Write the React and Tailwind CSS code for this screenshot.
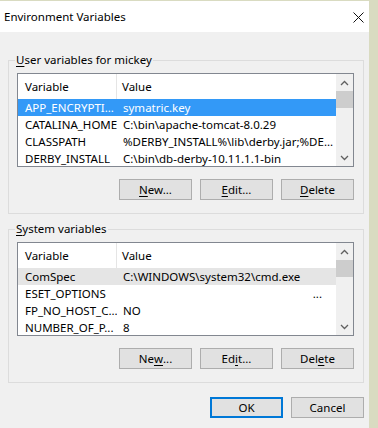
import React from "react";

const FONT = { fontFamily: '"Noto Sans", "Liberation Sans", sans-serif' };

function Btn({ children, primary }) {
  return (
    <div
      className={
        "w-[73px] h-[21px] flex items-center justify-center bg-[#e1e1e1] text-[11.5px] text-black leading-none " +
        (primary ? "border-2 border-[#0078d7]" : "border border-[#adadad]")
      }
    >
      {children}
    </div>
  );
}

function U({ children }) {
  return <span className="underline underline-offset-[2px]">{children}</span>;
}

function Chevron({ up }) {
  return (
    <svg width="9" height="6" viewBox="0 0 9 6">
      <path
        d={up ? "M1 5 L4.5 1.5 L8 5" : "M1 1 L4.5 4.5 L8 1"}
        fill="none"
        stroke="#606060"
        strokeWidth="1.3"
      />
    </svg>
  );
}

function ListBox({ rows, selected, selStyle }) {
  return (
    <div className="w-[337px] h-[94px] border border-[#828790] bg-white flex overflow-hidden">
      <div className="flex-1 flex flex-col overflow-hidden">
        <div className="h-[25px] flex shrink-0 items-center text-[11.5px] text-black">
          <div className="w-[99px] h-full flex items-center pl-[7px] border-r border-[#e5e5e5]">Variable</div>
          <div className="pl-[5px]">Value</div>
        </div>
        {rows.map((r, i) => (
          <div
            key={i}
            className={
              "h-[17px] shrink-0 flex items-center text-[11.5px] whitespace-nowrap " +
              (i === selected
                ? selStyle === "blue"
                  ? "bg-[#3399f7] text-white"
                  : "bg-[#e5e5e5] text-black"
                : "text-black")
            }
          >
            <div className="w-[99px] pl-[7px] overflow-hidden">{r[0]}</div>
            <div className={"pl-[6px] " + (r[2] ? "flex-1 text-right pr-[14px]" : "")}>{r[1]}</div>
          </div>
        ))}
      </div>
      <div className="w-[17px] bg-[#f0f0f0] flex flex-col shrink-0">
        <div className="h-[17px] flex items-center justify-center">
          <Chevron up />
        </div>
        <div className="h-[17px] bg-[#cdcdcd]" />
        <div className="flex-1" />
        <div className="h-[17px] flex items-center justify-center">
          <Chevron />
        </div>
      </div>
    </div>
  );
}

function Group({ label, children, className }) {
  return (
    <div className={"relative ml-[8px] w-[356px] border border-[#dcdcdc] pt-[12px] pl-[8px] pb-[13px] " + className}>
      <div className="absolute -top-[9px] left-[6px] bg-[#f0f0f0] px-[1px] text-[11.5px] leading-[16px] text-black">
        {label}
      </div>
      {children}
    </div>
  );
}

export default function App() {
  const userRows = [
    ["APP_ENCRYPTI...", "symatric.key"],
    ["CATALINA_HOME", "C:\\bin\\apache-tomcat-8.0.29"],
    ["CLASSPATH", "%DERBY_INSTALL%\\lib\\derby.jar;%DE..."],
    ["DERBY_INSTALL", "C:\\bin\\db-derby-10.11.1.1-bin"],
  ];
  const sysRows = [
    ["ComSpec", "C:\\WINDOWS\\system32\\cmd.exe"],
    ["ESET_OPTIONS", "...", true],
    ["FP_NO_HOST_C...", "NO"],
    ["NUMBER_OF_P...", "8"],
  ];
  return (
    <div className="w-[378px] h-[428px] bg-[#d9dbc1] pt-px overflow-hidden" style={FONT}>
      <div className="w-[369px] h-[427px] bg-[#f0f0f0] flex flex-col">
        <div className="h-[31px] bg-white flex items-center justify-between pl-[4px] pr-[3px] shrink-0">
          <span className="text-[11.5px] text-black">Environment Variables</span>
          <svg width="11" height="11" viewBox="0 0 11 11" className="mr-[2px] mt-[1px]">
            <path d="M0.5 0.5 L10.5 10.5 M10.5 0.5 L0.5 10.5" stroke="#111" strokeWidth="1" />
          </svg>
        </div>

        <Group label={<><U>U</U>ser variables for mickey</>} className="mt-[28px]">
          <ListBox rows={userRows} selected={0} selStyle="blue" />
          <div className="w-[337px] flex justify-end gap-[8px] mt-[12px]">
            <Btn><U>N</U>ew...</Btn>
            <Btn><U>E</U>dit...</Btn>
            <Btn><U>D</U>elete</Btn>
          </div>
        </Group>

        <Group label={<><U>S</U>ystem variables</>} className="mt-[15px]">
          <ListBox rows={sysRows} selected={0} selStyle="gray" />
          <div className="w-[337px] flex justify-end gap-[8px] mt-[12px]">
            <Btn>Ne<U>w</U>...</Btn>
            <Btn>Ed<U>i</U>t...</Btn>
            <Btn>Del<U>e</U>te</Btn>
          </div>
        </Group>

        <div className="ml-[8px] w-[356px] flex justify-end gap-[8px] mt-[14px]">
          <Btn primary>OK</Btn>
          <Btn>Cancel</Btn>
        </div>
      </div>
    </div>
  );
}
